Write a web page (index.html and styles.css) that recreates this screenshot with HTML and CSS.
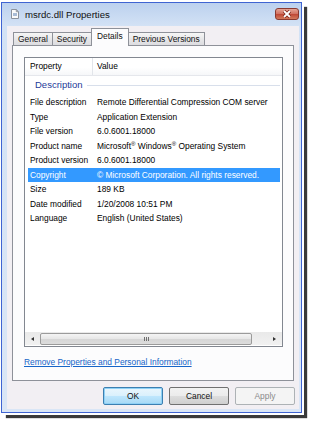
FILE: index.html
```html
<!DOCTYPE html>
<html>
<head>
<meta charset="utf-8">
<link rel="stylesheet" href="styles.css">
</head>
<body>
<div class="window">
  <div class="titlebar">
    <svg class="app-icon" width="8" height="10" viewBox="0 0 8 10">
      <path d="M0.5 0.5h4.8l2.2 2.2v6.8h-7z" fill="#fbfbfb" stroke="#8c929c"/>
      <path d="M5.3 0.5v2.2h2.2" fill="none" stroke="#8c929c"/>
      <rect x="2" y="4" width="4" height="3" fill="#a9bcd6"/>
    </svg>
    <span class="title">msrdc.dll Properties</span>
    <div class="close">
      <svg width="22" height="10" viewBox="0 0 22 10">
        <path d="M8 2 L14 8 M14 2 L8 8" stroke="#7a2418" stroke-width="3.2" fill="none"/>
        <path d="M8 2 L14 8 M14 2 L8 8" stroke="#ffffff" stroke-width="1.8" fill="none"/>
      </svg>
    </div>
  </div>
  <div class="client">
    <div class="tabs">
      <div class="tab">General</div>
      <div class="tab">Security</div>
      <div class="tab active">Details</div>
      <div class="tab">Previous Versions</div>
    </div>
    <div class="panel">
      <div class="list">
        <div class="list-header">
          <div class="col col-prop">Property</div>
          <div class="col col-val">Value</div>
        </div>
        <div class="list-body">
          <div class="group"><span>Description</span><i class="group-line"></i></div>
          <div class="row"><span class="c1">File description</span><span class="c2">Remote Differential Compression COM server</span></div>
          <div class="row"><span class="c1">Type</span><span class="c2">Application Extension</span></div>
          <div class="row"><span class="c1">File version</span><span class="c2">6.0.6001.18000</span></div>
          <div class="row"><span class="c1">Product name</span><span class="c2">Microsoft<sup>®</sup> Windows<sup>®</sup> Operating System</span></div>
          <div class="row"><span class="c1">Product version</span><span class="c2">6.0.6001.18000</span></div>
          <div class="row sel"><span class="c1">Copyright</span><span class="c2">© Microsoft Corporation. All rights reserved.</span></div>
          <div class="row"><span class="c1">Size</span><span class="c2">189 KB</span></div>
          <div class="row"><span class="c1">Date modified</span><span class="c2">1/20/2008 10:51 PM</span></div>
          <div class="row"><span class="c1">Language</span><span class="c2">English (United States)</span></div>
        </div>
        <div class="hscroll">
          <div class="sb-btn"><i class="arrow-left"></i></div>
          <div class="sb-track">
            <div class="thumb"><span class="grip"><i></i><i></i><i></i></span></div>
          </div>
          <div class="sb-btn right"><i class="arrow-right"></i></div>
        </div>
      </div>
      <a class="link" href="#">Remove Properties and Personal Information</a>
    </div>
    <div class="buttons">
      <div class="btn default">OK</div>
      <div class="btn">Cancel</div>
      <div class="btn disabled">Apply</div>
    </div>
  </div>
</div>
</body>
</html>
```
FILE: styles.css
```css
* { box-sizing: border-box; }
html, body { margin: 0; padding: 0; background: #fff; }
body {
  width: 309px;
  height: 422px;
  overflow: hidden;
  font-family: "Liberation Sans", Arial, sans-serif;
  font-size: 8.4px;
  color: #000;
}

.window {
  margin: 2px 0 0 1px;
  width: 301px;
  height: 411px;
  border: 1px solid #3f64d2;
  background: linear-gradient(#bcd1ee, #d3e2f5 23px, #dae6f6);
  box-shadow: 0 0 0 2px #fff, 5px 5px 1px #3a3a3a;
  display: flex;
  flex-direction: column;
  padding: 0 2px 3px 5px;
}

.titlebar {
  height: 23px;
  display: flex;
  align-items: center;
  flex-shrink: 0;
}
.app-icon { margin-left: 4px; margin-top: -2px; }
.title {
  margin-left: 6px;
  font-size: 9.6px;
  color: #111;
  margin-top: -1px;
}
.close {
  margin-left: auto;
  width: 24px;
  height: 12px;
  border: 1px solid #8a3a30;
  border-radius: 3px;
  background: linear-gradient(#e6a596, #d27565 45%, #c04a38 55%, #d37a5c);
  display: flex;
  align-items: center;
  justify-content: center;
  margin-top: -2px;
}
.close svg { display: block; }

.client {
  flex: 1;
  background: #f2eff3;
  padding: 2px 5px 4px 5px;
  display: flex;
  flex-direction: column;
}

.tabs {
  display: flex;
  align-items: flex-end;
  height: 18px;
  padding-left: 1px;
  margin-bottom: -1px;
  position: relative;
  z-index: 1;
  flex-shrink: 0;
}
.tab {
  height: 13px;
  margin-bottom: 1px;
  padding: 0 4px;
  border: 1px solid #8e9199;
  border-bottom: none;
  border-right: none;
  background: linear-gradient(#f6f6f6, #e7e7e9 50%, #dcdce0);
  line-height: 12px;
  white-space: nowrap;
  color: #111;
}
.tab:last-child { border-right: 1px solid #8e9199; }
.tab.active {
  height: 18px;
  margin-bottom: 0;
  padding: 0 5px;
  background: #fcfcfd;
  border-right: 1px solid #8e9199;
  line-height: 14px;
}
.tab.active + .tab { border-left: none; }

.panel {
  height: 336px;
  border: 1px solid #8e9199;
  background: #fcfcfd;
  padding: 11px 10px 0 11px;
  flex-shrink: 0;
}

.list {
  height: 290px;
  border: 1px solid #828790;
  background: #fff;
  display: flex;
  flex-direction: column;
}
.list-header {
  height: 18px;
  display: flex;
  border-bottom: 1px solid #e5e7ec;
  background: linear-gradient(#fff, #fff 55%, #f6f7f9);
  flex-shrink: 0;
}
.col { line-height: 17px; }
.col-prop {
  width: 68px;
  padding-left: 5px;
  border-right: 1px solid #e2e5ea;
}
.col-val { padding-left: 4px; }

.list-body { flex: 1; }
.group {
  height: 19px;
  display: flex;
  align-items: center;
  padding: 0 2px 3px 10px;
  color: #1e3a98;
  font-size: 9.5px;
}
.group-line {
  flex: 1;
  height: 1px;
  background: #d8dfeb;
  margin-left: 4px;
  margin-top: 2px;
}
.row {
  height: 14.5px;
  line-height: 14.5px;
  display: flex;
  margin: 0 2px 0 3px;
  white-space: nowrap;
}
.row .c1 { width: 69px; padding-left: 2px; flex-shrink: 0; }
.row sup { font-size: 6px; line-height: 0; vertical-align: 3px; }
.row.sel { background: #3399ff; color: #fff; }

.hscroll {
  height: 13px;
  margin-bottom: 1px;
  display: flex;
  background: linear-gradient(#e9e9e9, #f1f1f1);
  flex-shrink: 0;
}
.sb-btn {
  width: 15px;
  display: flex;
  align-items: center;
  justify-content: center;
}
.sb-btn.right { width: 16px; }
.arrow-left {
  width: 0; height: 0;
  border-top: 2.5px solid transparent;
  border-bottom: 2.5px solid transparent;
  border-right: 3px solid #333;
}
.arrow-right {
  width: 0; height: 0;
  border-top: 2.5px solid transparent;
  border-bottom: 2.5px solid transparent;
  border-left: 3px solid #333;
}
.sb-track { flex: 1; display: flex; align-items: center; }
.thumb {
  width: 212px;
  height: 12px;
  border: 1px solid #9b9b9b;
  border-radius: 2px;
  background: linear-gradient(#f4f4f4, #e6e6e6 50%, #d6d6d6 51%, #dcdcdc);
  display: flex;
  align-items: center;
  justify-content: center;
}
.grip { display: flex; gap: 1px; }
.grip i { display: block; width: 1px; height: 4px; background: #6f6f6f; }

.link {
  display: block;
  margin-top: 10px;
  color: #1665c8;
  text-decoration: underline;
  line-height: 10px;
}

.buttons {
  display: flex;
  justify-content: flex-end;
  gap: 6px;
  margin-top: 6px;
  margin-right: -1px;
}
.btn {
  width: 60px;
  height: 18px;
  border: 1px solid #707070;
  border-radius: 2px;
  background: linear-gradient(#f2f2f2, #ebebeb 50%, #dddddd 51%, #cfcfcf);
  display: flex;
  align-items: center;
  justify-content: center;
  color: #111;
}
.btn.default {
  border-color: #3c7fb1;
  background: linear-gradient(#eaf6fd, #d9f0fc 50%, #bee6fd 51%, #a7d9f5);
  box-shadow: inset 0 0 0 1px #8fd1f6;
}
.btn.disabled {
  border-color: #adb2b5;
  background: #f4f4f4;
  color: #8a8a8a;
}
```
